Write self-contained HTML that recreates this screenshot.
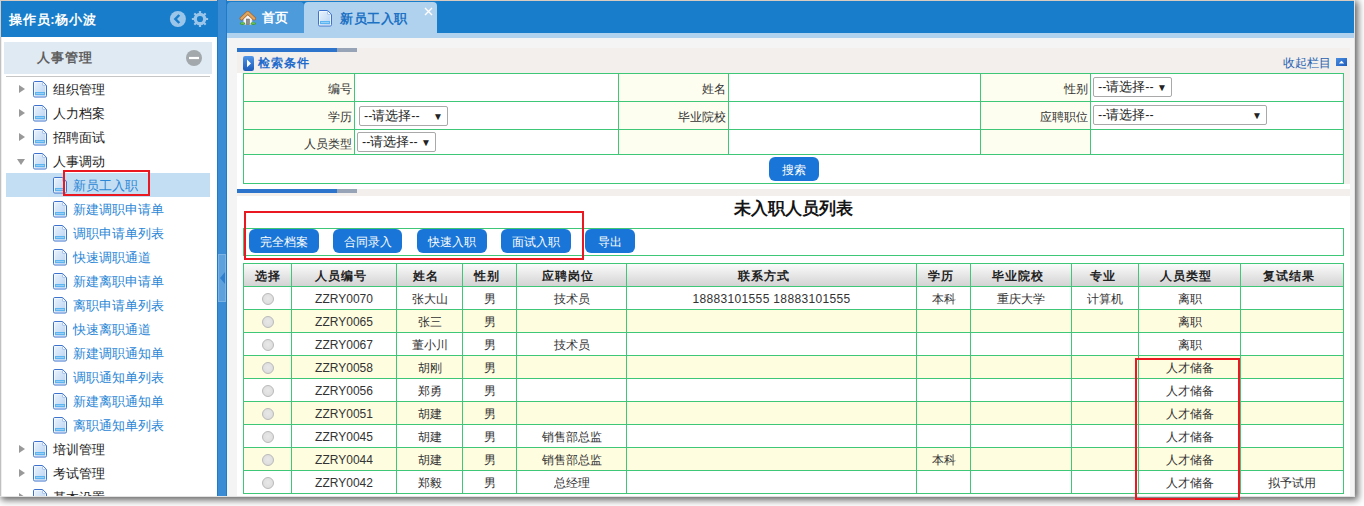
<!DOCTYPE html>
<html><head><meta charset="utf-8">
<style>
*{box-sizing:border-box}
html,body{margin:0;padding:0}
body{width:1364px;height:506px;overflow:hidden;position:relative;background:#fff;font-family:"Liberation Sans",sans-serif;font-size:12px;color:#333}
.abs{position:absolute}
#shadowR{left:0;top:0;width:1355px;height:497px;background:#e2e2e2;box-shadow:2px 2px 7px 1px rgba(0,0,0,0.62)}
#shadowB{display:none}
#win{left:0;top:0;width:1354px;height:496px;background:#fff;overflow:hidden}
/* sidebar */
#sbh{left:1px;top:1px;width:216px;height:36px;background:#187ecb}
#sbh .t{position:absolute;left:8px;top:10px;color:#fff;font-weight:bold;font-size:13px;line-height:17px;white-space:nowrap;letter-spacing:0.75px}
#acc{left:4px;top:42px;width:208px;height:32px;background:#e0eaf3}
#acc .t{position:absolute;left:33px;top:8px;color:#5f5f5f;font-weight:bold;font-size:13px;letter-spacing:1px;line-height:16px}
#sep{left:6px;top:76px;width:204px;height:1px;background:#c6c6c6}
.row{position:absolute;height:24px;white-space:nowrap;font-size:13px;line-height:24px}
.row .tx{position:absolute;top:1px}
.par .tx{left:53px;color:#222}
.chi .tx{left:73px;color:#2a86d6}
.tri{position:absolute;left:19px;top:8px;width:0;height:0;border-top:4.5px solid transparent;border-bottom:4.5px solid transparent;border-left:6px solid #999}
.trid{position:absolute;left:17px;top:10px;width:0;height:0;border-left:4.5px solid transparent;border-right:4.5px solid transparent;border-top:6px solid #999}
.ic{position:absolute;top:4px;width:15px;height:17px}
.par .ic{left:33px}
.chi .ic{left:53px}
#sel{left:6px;top:173px;width:204px;height:24px;background:#c3ddf2}
#split{left:217px;top:0;width:10px;height:496px;background:#3a8cd4;border-left:1px solid #1f7ac8;border-right:1px solid #1f7ac8}
#handle{left:218px;top:254px;width:8px;height:48px;background:#5ea2dd;border:1px solid #7bb3e4}
/* tabs */
#tabbar{left:227px;top:1px;width:1127px;height:32px;background:#187ecb}
#tabstrip{left:227px;top:33px;width:1127px;height:5px;background:#b0d2ee}
.tab{position:absolute;top:2px;height:31px;border-radius:4px 4px 0 0}
#tab1{left:227px;width:77px;background:#4d9bdb}
#tab2{left:304px;width:133px;background:#b0d2ee}
#content{left:227px;top:38px;width:1127px;height:458px;background:#f4f4f4}
.panel{position:absolute;background:#fff}
#p1{left:237px;top:48px;width:1113px;height:141px}
#p2{left:237px;top:189px;width:1113px;height:307px}
.hband{position:absolute;left:0;top:0;width:100%;background:#f2efec}
.bar{position:absolute;left:0;top:0;width:100px;height:4px;background:#2d74cc}
.bar2{position:absolute;left:100px;top:0;width:20px;height:4px;background:#97a3b6}
table{border-collapse:collapse;table-layout:fixed}
td,th{padding:0;border:1px solid #4ecb7c;font-size:12px;overflow:hidden;white-space:nowrap}
#stbl{position:absolute;left:243px;top:73px}
#stbl td{height:28px}
.lb{background:#fefef0;text-align:right;padding-right:3px !important;color:#333}
.sel{position:absolute;height:19px;border:1px solid #a9a9a9;border-radius:2px;background:#fff;font-size:12.5px;line-height:19px;padding-left:4px;color:#222;white-space:nowrap}
.sel .ar{position:absolute;right:4px;top:0;font-size:10px}
.btn{position:absolute;height:24px;background:#1976d8;color:#fff;border-radius:6px;font-size:12px;line-height:26px;text-align:center;white-space:nowrap}
#dtbl{position:absolute;left:243px;top:263px}
#dtbl th{height:23px;background:linear-gradient(#fdfdfd,#d3d3d3);font-weight:bold;font-size:13px;color:#222}
#dtbl td{height:23px;text-align:center;color:#333}
#dtbl tr.y td{background:#fefce0}
.radio{display:inline-block;width:12px;height:12px;border-radius:50%;border:1px solid #b9b9b9;background:radial-gradient(circle at 50% 45%,#e8e8e8,#d9d9d9);vertical-align:middle}
.redbox{position:absolute;border:2px solid #ea1820}
.tc{white-space:nowrap;overflow:hidden;font-size:12px}
.hdrbg{background:linear-gradient(#fdfdfd,#d3d3d3)}
</style></head><body>
<div id="shadowR" class="abs"></div>
<div id="shadowB" class="abs"></div>
<div id="win" class="abs">
<div class="abs" style="left:0;top:0;width:1354px;height:1px;background:#dacbc0"></div><div class="abs" style="left:0;top:0;width:1px;height:37px;background:#dacbc0"></div><div class="abs" style="left:0;top:37px;width:1px;height:459px;background:#c0c0c0"></div><div class="abs" style="left:1px;top:37px;width:1px;height:459px;background:#eeeeee"></div>

<!-- sidebar -->
<div id="sbh" class="abs"><div class="t">操作员:杨小波</div>
<svg class="abs" style="left:168px;top:9px" width="18" height="18" viewBox="0 0 18 18"><circle cx="8.9" cy="9" r="8" fill="#9cc5ea"/><path d="M10.3 5 L6.4 9 L10.3 13" stroke="#187ecb" stroke-width="2.5" fill="none" stroke-linecap="butt" stroke-linejoin="miter"/></svg>
<svg class="abs" style="left:190px;top:9px" width="18" height="18" viewBox="0 0 18 18"><g fill="#9cc5ea"><circle cx="9" cy="9" r="6.3"/><g transform="rotate(0 9 9)"><rect x="7.9" y="0.9" width="2.2" height="3" rx="0.6"/><rect x="7.9" y="14.1" width="2.2" height="3" rx="0.6"/></g><g transform="rotate(45 9 9)"><rect x="7.9" y="0.9" width="2.2" height="3" rx="0.6"/><rect x="7.9" y="14.1" width="2.2" height="3" rx="0.6"/></g><g transform="rotate(90 9 9)"><rect x="7.9" y="0.9" width="2.2" height="3" rx="0.6"/><rect x="7.9" y="14.1" width="2.2" height="3" rx="0.6"/></g><g transform="rotate(135 9 9)"><rect x="7.9" y="0.9" width="2.2" height="3" rx="0.6"/><rect x="7.9" y="14.1" width="2.2" height="3" rx="0.6"/></g></g><circle cx="9" cy="9" r="3.1" fill="#187ecb"/></svg>
</div>
<div id="acc" class="abs"><div class="t">人事管理</div>
<svg class="abs" style="left:182px;top:8px" width="16" height="16" viewBox="0 0 16 16"><circle cx="8" cy="8" r="8" fill="#a3a8ac"/><rect x="3" y="6.9" width="10" height="2.2" fill="#fff"/></svg>
</div>
<div id="sep" class="abs"></div>
<div id="sel" class="abs"></div>
<div id="tree"><div class="row par" style="left:0;top:77px;width:216px"><div class="tri"></div><svg class="ic" viewBox="0 0 15 17"><defs><linearGradient id="g0" x1="0" y1="0" x2="1" y2="1"><stop offset="0" stop-color="#e6f1fd"/><stop offset="1" stop-color="#b9d4f2"/></linearGradient></defs><path d="M0.5 1.8 Q0.5 0.5 1.8 0.5 L9.6 0.5 L13.5 4.4 L13.5 14.7 Q13.5 16 12.2 16 L1.8 16 Q0.5 16 0.5 14.7 Z" fill="#fff" stroke="#3d73cc" stroke-width="1"/><path d="M1.6 1.6 L9.2 1.6 L9.2 4.9 L12.4 4.9 L12.4 14.9 L1.6 14.9 Z" fill="url(#g0)"/><path d="M9.6 1 L9.6 4.4 L13 4.4" fill="none" stroke="#8fb3e6" stroke-width="0.8"/><rect x="2" y="11" width="10" height="3" fill="#5cb5f1"/><rect x="3" y="12.1" width="8" height="0.8" fill="#a6d6f8"/></svg><span class="tx">组织管理</span></div><div class="row par" style="left:0;top:101px;width:216px"><div class="tri"></div><svg class="ic" viewBox="0 0 15 17"><defs><linearGradient id="g1" x1="0" y1="0" x2="1" y2="1"><stop offset="0" stop-color="#e6f1fd"/><stop offset="1" stop-color="#b9d4f2"/></linearGradient></defs><path d="M0.5 1.8 Q0.5 0.5 1.8 0.5 L9.6 0.5 L13.5 4.4 L13.5 14.7 Q13.5 16 12.2 16 L1.8 16 Q0.5 16 0.5 14.7 Z" fill="#fff" stroke="#3d73cc" stroke-width="1"/><path d="M1.6 1.6 L9.2 1.6 L9.2 4.9 L12.4 4.9 L12.4 14.9 L1.6 14.9 Z" fill="url(#g1)"/><path d="M9.6 1 L9.6 4.4 L13 4.4" fill="none" stroke="#8fb3e6" stroke-width="0.8"/><rect x="2" y="11" width="10" height="3" fill="#5cb5f1"/><rect x="3" y="12.1" width="8" height="0.8" fill="#a6d6f8"/></svg><span class="tx">人力档案</span></div><div class="row par" style="left:0;top:125px;width:216px"><div class="tri"></div><svg class="ic" viewBox="0 0 15 17"><defs><linearGradient id="g2" x1="0" y1="0" x2="1" y2="1"><stop offset="0" stop-color="#e6f1fd"/><stop offset="1" stop-color="#b9d4f2"/></linearGradient></defs><path d="M0.5 1.8 Q0.5 0.5 1.8 0.5 L9.6 0.5 L13.5 4.4 L13.5 14.7 Q13.5 16 12.2 16 L1.8 16 Q0.5 16 0.5 14.7 Z" fill="#fff" stroke="#3d73cc" stroke-width="1"/><path d="M1.6 1.6 L9.2 1.6 L9.2 4.9 L12.4 4.9 L12.4 14.9 L1.6 14.9 Z" fill="url(#g2)"/><path d="M9.6 1 L9.6 4.4 L13 4.4" fill="none" stroke="#8fb3e6" stroke-width="0.8"/><rect x="2" y="11" width="10" height="3" fill="#5cb5f1"/><rect x="3" y="12.1" width="8" height="0.8" fill="#a6d6f8"/></svg><span class="tx">招聘面试</span></div><div class="row par" style="left:0;top:149px;width:216px"><div class="trid"></div><svg class="ic" viewBox="0 0 15 17"><defs><linearGradient id="g3" x1="0" y1="0" x2="1" y2="1"><stop offset="0" stop-color="#e6f1fd"/><stop offset="1" stop-color="#b9d4f2"/></linearGradient></defs><path d="M0.5 1.8 Q0.5 0.5 1.8 0.5 L9.6 0.5 L13.5 4.4 L13.5 14.7 Q13.5 16 12.2 16 L1.8 16 Q0.5 16 0.5 14.7 Z" fill="#fff" stroke="#3d73cc" stroke-width="1"/><path d="M1.6 1.6 L9.2 1.6 L9.2 4.9 L12.4 4.9 L12.4 14.9 L1.6 14.9 Z" fill="url(#g3)"/><path d="M9.6 1 L9.6 4.4 L13 4.4" fill="none" stroke="#8fb3e6" stroke-width="0.8"/><rect x="2" y="11" width="10" height="3" fill="#5cb5f1"/><rect x="3" y="12.1" width="8" height="0.8" fill="#a6d6f8"/></svg><span class="tx">人事调动</span></div><div class="row chi" style="left:0;top:173px;width:216px"><svg class="ic" viewBox="0 0 15 17"><defs><linearGradient id="g4" x1="0" y1="0" x2="1" y2="1"><stop offset="0" stop-color="#e6f1fd"/><stop offset="1" stop-color="#b9d4f2"/></linearGradient></defs><path d="M0.5 1.8 Q0.5 0.5 1.8 0.5 L9.6 0.5 L13.5 4.4 L13.5 14.7 Q13.5 16 12.2 16 L1.8 16 Q0.5 16 0.5 14.7 Z" fill="#fff" stroke="#3d73cc" stroke-width="1"/><path d="M1.6 1.6 L9.2 1.6 L9.2 4.9 L12.4 4.9 L12.4 14.9 L1.6 14.9 Z" fill="url(#g4)"/><path d="M9.6 1 L9.6 4.4 L13 4.4" fill="none" stroke="#8fb3e6" stroke-width="0.8"/><rect x="2" y="11" width="10" height="3" fill="#5cb5f1"/><rect x="3" y="12.1" width="8" height="0.8" fill="#a6d6f8"/></svg><span class="tx">新员工入职</span></div><div class="row chi" style="left:0;top:197px;width:216px"><svg class="ic" viewBox="0 0 15 17"><defs><linearGradient id="g5" x1="0" y1="0" x2="1" y2="1"><stop offset="0" stop-color="#e6f1fd"/><stop offset="1" stop-color="#b9d4f2"/></linearGradient></defs><path d="M0.5 1.8 Q0.5 0.5 1.8 0.5 L9.6 0.5 L13.5 4.4 L13.5 14.7 Q13.5 16 12.2 16 L1.8 16 Q0.5 16 0.5 14.7 Z" fill="#fff" stroke="#3d73cc" stroke-width="1"/><path d="M1.6 1.6 L9.2 1.6 L9.2 4.9 L12.4 4.9 L12.4 14.9 L1.6 14.9 Z" fill="url(#g5)"/><path d="M9.6 1 L9.6 4.4 L13 4.4" fill="none" stroke="#8fb3e6" stroke-width="0.8"/><rect x="2" y="11" width="10" height="3" fill="#5cb5f1"/><rect x="3" y="12.1" width="8" height="0.8" fill="#a6d6f8"/></svg><span class="tx">新建调职申请单</span></div><div class="row chi" style="left:0;top:221px;width:216px"><svg class="ic" viewBox="0 0 15 17"><defs><linearGradient id="g6" x1="0" y1="0" x2="1" y2="1"><stop offset="0" stop-color="#e6f1fd"/><stop offset="1" stop-color="#b9d4f2"/></linearGradient></defs><path d="M0.5 1.8 Q0.5 0.5 1.8 0.5 L9.6 0.5 L13.5 4.4 L13.5 14.7 Q13.5 16 12.2 16 L1.8 16 Q0.5 16 0.5 14.7 Z" fill="#fff" stroke="#3d73cc" stroke-width="1"/><path d="M1.6 1.6 L9.2 1.6 L9.2 4.9 L12.4 4.9 L12.4 14.9 L1.6 14.9 Z" fill="url(#g6)"/><path d="M9.6 1 L9.6 4.4 L13 4.4" fill="none" stroke="#8fb3e6" stroke-width="0.8"/><rect x="2" y="11" width="10" height="3" fill="#5cb5f1"/><rect x="3" y="12.1" width="8" height="0.8" fill="#a6d6f8"/></svg><span class="tx">调职申请单列表</span></div><div class="row chi" style="left:0;top:245px;width:216px"><svg class="ic" viewBox="0 0 15 17"><defs><linearGradient id="g7" x1="0" y1="0" x2="1" y2="1"><stop offset="0" stop-color="#e6f1fd"/><stop offset="1" stop-color="#b9d4f2"/></linearGradient></defs><path d="M0.5 1.8 Q0.5 0.5 1.8 0.5 L9.6 0.5 L13.5 4.4 L13.5 14.7 Q13.5 16 12.2 16 L1.8 16 Q0.5 16 0.5 14.7 Z" fill="#fff" stroke="#3d73cc" stroke-width="1"/><path d="M1.6 1.6 L9.2 1.6 L9.2 4.9 L12.4 4.9 L12.4 14.9 L1.6 14.9 Z" fill="url(#g7)"/><path d="M9.6 1 L9.6 4.4 L13 4.4" fill="none" stroke="#8fb3e6" stroke-width="0.8"/><rect x="2" y="11" width="10" height="3" fill="#5cb5f1"/><rect x="3" y="12.1" width="8" height="0.8" fill="#a6d6f8"/></svg><span class="tx">快速调职通道</span></div><div class="row chi" style="left:0;top:269px;width:216px"><svg class="ic" viewBox="0 0 15 17"><defs><linearGradient id="g8" x1="0" y1="0" x2="1" y2="1"><stop offset="0" stop-color="#e6f1fd"/><stop offset="1" stop-color="#b9d4f2"/></linearGradient></defs><path d="M0.5 1.8 Q0.5 0.5 1.8 0.5 L9.6 0.5 L13.5 4.4 L13.5 14.7 Q13.5 16 12.2 16 L1.8 16 Q0.5 16 0.5 14.7 Z" fill="#fff" stroke="#3d73cc" stroke-width="1"/><path d="M1.6 1.6 L9.2 1.6 L9.2 4.9 L12.4 4.9 L12.4 14.9 L1.6 14.9 Z" fill="url(#g8)"/><path d="M9.6 1 L9.6 4.4 L13 4.4" fill="none" stroke="#8fb3e6" stroke-width="0.8"/><rect x="2" y="11" width="10" height="3" fill="#5cb5f1"/><rect x="3" y="12.1" width="8" height="0.8" fill="#a6d6f8"/></svg><span class="tx">新建离职申请单</span></div><div class="row chi" style="left:0;top:293px;width:216px"><svg class="ic" viewBox="0 0 15 17"><defs><linearGradient id="g9" x1="0" y1="0" x2="1" y2="1"><stop offset="0" stop-color="#e6f1fd"/><stop offset="1" stop-color="#b9d4f2"/></linearGradient></defs><path d="M0.5 1.8 Q0.5 0.5 1.8 0.5 L9.6 0.5 L13.5 4.4 L13.5 14.7 Q13.5 16 12.2 16 L1.8 16 Q0.5 16 0.5 14.7 Z" fill="#fff" stroke="#3d73cc" stroke-width="1"/><path d="M1.6 1.6 L9.2 1.6 L9.2 4.9 L12.4 4.9 L12.4 14.9 L1.6 14.9 Z" fill="url(#g9)"/><path d="M9.6 1 L9.6 4.4 L13 4.4" fill="none" stroke="#8fb3e6" stroke-width="0.8"/><rect x="2" y="11" width="10" height="3" fill="#5cb5f1"/><rect x="3" y="12.1" width="8" height="0.8" fill="#a6d6f8"/></svg><span class="tx">离职申请单列表</span></div><div class="row chi" style="left:0;top:317px;width:216px"><svg class="ic" viewBox="0 0 15 17"><defs><linearGradient id="g10" x1="0" y1="0" x2="1" y2="1"><stop offset="0" stop-color="#e6f1fd"/><stop offset="1" stop-color="#b9d4f2"/></linearGradient></defs><path d="M0.5 1.8 Q0.5 0.5 1.8 0.5 L9.6 0.5 L13.5 4.4 L13.5 14.7 Q13.5 16 12.2 16 L1.8 16 Q0.5 16 0.5 14.7 Z" fill="#fff" stroke="#3d73cc" stroke-width="1"/><path d="M1.6 1.6 L9.2 1.6 L9.2 4.9 L12.4 4.9 L12.4 14.9 L1.6 14.9 Z" fill="url(#g10)"/><path d="M9.6 1 L9.6 4.4 L13 4.4" fill="none" stroke="#8fb3e6" stroke-width="0.8"/><rect x="2" y="11" width="10" height="3" fill="#5cb5f1"/><rect x="3" y="12.1" width="8" height="0.8" fill="#a6d6f8"/></svg><span class="tx">快速离职通道</span></div><div class="row chi" style="left:0;top:341px;width:216px"><svg class="ic" viewBox="0 0 15 17"><defs><linearGradient id="g11" x1="0" y1="0" x2="1" y2="1"><stop offset="0" stop-color="#e6f1fd"/><stop offset="1" stop-color="#b9d4f2"/></linearGradient></defs><path d="M0.5 1.8 Q0.5 0.5 1.8 0.5 L9.6 0.5 L13.5 4.4 L13.5 14.7 Q13.5 16 12.2 16 L1.8 16 Q0.5 16 0.5 14.7 Z" fill="#fff" stroke="#3d73cc" stroke-width="1"/><path d="M1.6 1.6 L9.2 1.6 L9.2 4.9 L12.4 4.9 L12.4 14.9 L1.6 14.9 Z" fill="url(#g11)"/><path d="M9.6 1 L9.6 4.4 L13 4.4" fill="none" stroke="#8fb3e6" stroke-width="0.8"/><rect x="2" y="11" width="10" height="3" fill="#5cb5f1"/><rect x="3" y="12.1" width="8" height="0.8" fill="#a6d6f8"/></svg><span class="tx">新建调职通知单</span></div><div class="row chi" style="left:0;top:365px;width:216px"><svg class="ic" viewBox="0 0 15 17"><defs><linearGradient id="g12" x1="0" y1="0" x2="1" y2="1"><stop offset="0" stop-color="#e6f1fd"/><stop offset="1" stop-color="#b9d4f2"/></linearGradient></defs><path d="M0.5 1.8 Q0.5 0.5 1.8 0.5 L9.6 0.5 L13.5 4.4 L13.5 14.7 Q13.5 16 12.2 16 L1.8 16 Q0.5 16 0.5 14.7 Z" fill="#fff" stroke="#3d73cc" stroke-width="1"/><path d="M1.6 1.6 L9.2 1.6 L9.2 4.9 L12.4 4.9 L12.4 14.9 L1.6 14.9 Z" fill="url(#g12)"/><path d="M9.6 1 L9.6 4.4 L13 4.4" fill="none" stroke="#8fb3e6" stroke-width="0.8"/><rect x="2" y="11" width="10" height="3" fill="#5cb5f1"/><rect x="3" y="12.1" width="8" height="0.8" fill="#a6d6f8"/></svg><span class="tx">调职通知单列表</span></div><div class="row chi" style="left:0;top:389px;width:216px"><svg class="ic" viewBox="0 0 15 17"><defs><linearGradient id="g13" x1="0" y1="0" x2="1" y2="1"><stop offset="0" stop-color="#e6f1fd"/><stop offset="1" stop-color="#b9d4f2"/></linearGradient></defs><path d="M0.5 1.8 Q0.5 0.5 1.8 0.5 L9.6 0.5 L13.5 4.4 L13.5 14.7 Q13.5 16 12.2 16 L1.8 16 Q0.5 16 0.5 14.7 Z" fill="#fff" stroke="#3d73cc" stroke-width="1"/><path d="M1.6 1.6 L9.2 1.6 L9.2 4.9 L12.4 4.9 L12.4 14.9 L1.6 14.9 Z" fill="url(#g13)"/><path d="M9.6 1 L9.6 4.4 L13 4.4" fill="none" stroke="#8fb3e6" stroke-width="0.8"/><rect x="2" y="11" width="10" height="3" fill="#5cb5f1"/><rect x="3" y="12.1" width="8" height="0.8" fill="#a6d6f8"/></svg><span class="tx">新建离职通知单</span></div><div class="row chi" style="left:0;top:413px;width:216px"><svg class="ic" viewBox="0 0 15 17"><defs><linearGradient id="g14" x1="0" y1="0" x2="1" y2="1"><stop offset="0" stop-color="#e6f1fd"/><stop offset="1" stop-color="#b9d4f2"/></linearGradient></defs><path d="M0.5 1.8 Q0.5 0.5 1.8 0.5 L9.6 0.5 L13.5 4.4 L13.5 14.7 Q13.5 16 12.2 16 L1.8 16 Q0.5 16 0.5 14.7 Z" fill="#fff" stroke="#3d73cc" stroke-width="1"/><path d="M1.6 1.6 L9.2 1.6 L9.2 4.9 L12.4 4.9 L12.4 14.9 L1.6 14.9 Z" fill="url(#g14)"/><path d="M9.6 1 L9.6 4.4 L13 4.4" fill="none" stroke="#8fb3e6" stroke-width="0.8"/><rect x="2" y="11" width="10" height="3" fill="#5cb5f1"/><rect x="3" y="12.1" width="8" height="0.8" fill="#a6d6f8"/></svg><span class="tx">离职通知单列表</span></div><div class="row par" style="left:0;top:437px;width:216px"><div class="tri"></div><svg class="ic" viewBox="0 0 15 17"><defs><linearGradient id="g15" x1="0" y1="0" x2="1" y2="1"><stop offset="0" stop-color="#e6f1fd"/><stop offset="1" stop-color="#b9d4f2"/></linearGradient></defs><path d="M0.5 1.8 Q0.5 0.5 1.8 0.5 L9.6 0.5 L13.5 4.4 L13.5 14.7 Q13.5 16 12.2 16 L1.8 16 Q0.5 16 0.5 14.7 Z" fill="#fff" stroke="#3d73cc" stroke-width="1"/><path d="M1.6 1.6 L9.2 1.6 L9.2 4.9 L12.4 4.9 L12.4 14.9 L1.6 14.9 Z" fill="url(#g15)"/><path d="M9.6 1 L9.6 4.4 L13 4.4" fill="none" stroke="#8fb3e6" stroke-width="0.8"/><rect x="2" y="11" width="10" height="3" fill="#5cb5f1"/><rect x="3" y="12.1" width="8" height="0.8" fill="#a6d6f8"/></svg><span class="tx">培训管理</span></div><div class="row par" style="left:0;top:461px;width:216px"><div class="tri"></div><svg class="ic" viewBox="0 0 15 17"><defs><linearGradient id="g16" x1="0" y1="0" x2="1" y2="1"><stop offset="0" stop-color="#e6f1fd"/><stop offset="1" stop-color="#b9d4f2"/></linearGradient></defs><path d="M0.5 1.8 Q0.5 0.5 1.8 0.5 L9.6 0.5 L13.5 4.4 L13.5 14.7 Q13.5 16 12.2 16 L1.8 16 Q0.5 16 0.5 14.7 Z" fill="#fff" stroke="#3d73cc" stroke-width="1"/><path d="M1.6 1.6 L9.2 1.6 L9.2 4.9 L12.4 4.9 L12.4 14.9 L1.6 14.9 Z" fill="url(#g16)"/><path d="M9.6 1 L9.6 4.4 L13 4.4" fill="none" stroke="#8fb3e6" stroke-width="0.8"/><rect x="2" y="11" width="10" height="3" fill="#5cb5f1"/><rect x="3" y="12.1" width="8" height="0.8" fill="#a6d6f8"/></svg><span class="tx">考试管理</span></div><div class="row par" style="left:0;top:485px;width:216px"><div class="tri"></div><svg class="ic" viewBox="0 0 15 17"><defs><linearGradient id="g17" x1="0" y1="0" x2="1" y2="1"><stop offset="0" stop-color="#e6f1fd"/><stop offset="1" stop-color="#b9d4f2"/></linearGradient></defs><path d="M0.5 1.8 Q0.5 0.5 1.8 0.5 L9.6 0.5 L13.5 4.4 L13.5 14.7 Q13.5 16 12.2 16 L1.8 16 Q0.5 16 0.5 14.7 Z" fill="#fff" stroke="#3d73cc" stroke-width="1"/><path d="M1.6 1.6 L9.2 1.6 L9.2 4.9 L12.4 4.9 L12.4 14.9 L1.6 14.9 Z" fill="url(#g17)"/><path d="M9.6 1 L9.6 4.4 L13 4.4" fill="none" stroke="#8fb3e6" stroke-width="0.8"/><rect x="2" y="11" width="10" height="3" fill="#5cb5f1"/><rect x="3" y="12.1" width="8" height="0.8" fill="#a6d6f8"/></svg><span class="tx">基本设置</span></div></div>

<div id="split" class="abs"></div>
<div id="handle" class="abs"><div class="abs" style="left:1px;top:17px;width:0;height:0;border-top:6px solid transparent;border-bottom:6px solid transparent;border-right:5px solid #2f7fcf"></div></div>

<!-- tabs -->
<div id="tabbar" class="abs"></div>
<div id="tab1" class="tab"></div>
<div id="tab2" class="tab"></div>
<div id="tabstrip" class="abs"></div>
<div id="content" class="abs"></div>

<div id="p1" class="panel"><div class="hband" style="height:25px"></div><div class="bar"></div><div class="bar2"></div></div>
<div id="p2" class="panel"><div class="hband" style="height:7px"></div><div class="bar"></div><div class="bar2"></div></div>
<svg class="abs" style="left:239px;top:10px" width="18" height="16" viewBox="0 0 18 16"><path d="M4.6 8.2 L8.8 4.4 L13 8.2 L13 14.6 L4.6 14.6 Z" fill="#f7f7f7" stroke="#c9c9c9" stroke-width="0.6"/><path d="M2.4 8.6 L8.8 2.6 L15.2 8.6" fill="none" stroke="#a8642a" stroke-width="3.6" stroke-linejoin="round" stroke-linecap="round"/><path d="M2.4 8.6 L8.8 2.6 L15.2 8.6" fill="none" stroke="#dfa660" stroke-width="2.2" stroke-linejoin="round" stroke-linecap="round"/><rect x="7.3" y="9" width="3.2" height="5.6" fill="#8e8e8e" stroke="#666" stroke-width="0.5"/><ellipse cx="3.6" cy="13.6" rx="2.7" ry="1.4" fill="#3f9e33"/><ellipse cx="14.2" cy="13.6" rx="2.7" ry="1.4" fill="#3f9e33"/><ellipse cx="3.6" cy="13.2" rx="1.8" ry="0.6" fill="#7ccc5e"/><ellipse cx="14.2" cy="13.2" rx="1.8" ry="0.6" fill="#7ccc5e"/></svg>
<div class="abs" style="left:262px;top:9px;font-size:13px;font-weight:bold;color:#fff;line-height:18px;white-space:nowrap">首页</div>
<div class="abs" style="left:318px;top:10px;width:16px;height:18px"><svg width="15" height="17" viewBox="0 0 15 17"><defs><linearGradient id="gt" x1="0" y1="0" x2="1" y2="1"><stop offset="0" stop-color="#e6f1fd"/><stop offset="1" stop-color="#b9d4f2"/></linearGradient></defs><path d="M0.5 1.8 Q0.5 0.5 1.8 0.5 L9.6 0.5 L13.5 4.4 L13.5 14.7 Q13.5 16 12.2 16 L1.8 16 Q0.5 16 0.5 14.7 Z" fill="#fff" stroke="#3d73cc" stroke-width="1"/><path d="M1.6 1.6 L9.2 1.6 L9.2 4.9 L12.4 4.9 L12.4 14.9 L1.6 14.9 Z" fill="url(#gt)"/><path d="M9.6 1 L9.6 4.4 L13 4.4" fill="none" stroke="#8fb3e6" stroke-width="0.8"/><rect x="2" y="11" width="10" height="3" fill="#5cb5f1"/><rect x="3" y="12.1" width="8" height="0.8" fill="#a6d6f8"/></svg></div>
<div class="abs" style="left:340px;top:10px;font-size:13px;letter-spacing:0.6px;font-weight:bold;color:#1d72c4;line-height:18px;white-space:nowrap">新员工入职</div>
<svg class="abs" style="left:424px;top:7px" width="9" height="9" viewBox="0 0 9 9"><path d="M1 1 L8 8 M8 1 L1 8" stroke="#fff" stroke-width="1.4"/></svg>
<svg class="abs" style="left:243px;top:56px" width="11" height="15" viewBox="0 0 11 15"><defs><linearGradient id="bq" x1="0" y1="0" x2="0" y2="1"><stop offset="0" stop-color="#4f95e8"/><stop offset="1" stop-color="#1c58b8"/></linearGradient></defs><rect x="0" y="0" width="11" height="15" rx="2.2" fill="url(#bq)"/><path d="M4 3.6 L8 7.4 L4 11.2 Z" fill="#fff"/></svg>
<div class="abs" style="left:258px;top:54px;font-size:12px;letter-spacing:1px;font-weight:bold;color:#1f6bcc;line-height:18px;white-space:nowrap">检索条件</div>
<div class="abs" style="left:1283px;top:54px;font-size:12px;color:#1f5fb0;line-height:18px;white-space:nowrap">收起栏目</div>
<svg class="abs" style="left:1336px;top:58px" width="11" height="8" viewBox="0 0 11 8"><defs><linearGradient id="cq" x1="0" y1="0" x2="1" y2="1"><stop offset="0" stop-color="#4a8ce0"/><stop offset="1" stop-color="#1d5cbd"/></linearGradient></defs><rect x="0" y="0" width="11" height="8" fill="url(#cq)"/><path d="M2.8 5.4 L5.5 2.7 L8.2 5.4 Z" fill="#fff"/></svg>
<div class="abs" style="left:1344px;top:73px;width:6px;height:111px;background:#f2efec"></div>
<div class="abs" style="left:243px;top:73px;width:111px;height:81px;background:#fefef0"></div>
<div class="abs" style="left:618px;top:73px;width:110px;height:81px;background:#fefef0"></div>
<div class="abs" style="left:980px;top:73px;width:110px;height:81px;background:#fefef0"></div>
<div class="abs" style="left:243px;top:73px;width:1101px;height:1px;background:#3dc777"></div>
<div class="abs" style="left:243px;top:101px;width:1101px;height:1px;background:#3dc777"></div>
<div class="abs" style="left:243px;top:129px;width:1101px;height:1px;background:#3dc777"></div>
<div class="abs" style="left:243px;top:154px;width:1101px;height:1px;background:#3dc777"></div>
<div class="abs" style="left:243px;top:183px;width:1101px;height:1px;background:#3dc777"></div>
<div class="abs" style="left:243px;top:73px;width:1px;height:111px;background:#3dc777"></div>
<div class="abs" style="left:354px;top:73px;width:1px;height:81px;background:#3dc777"></div>
<div class="abs" style="left:618px;top:73px;width:1px;height:81px;background:#3dc777"></div>
<div class="abs" style="left:728px;top:73px;width:1px;height:81px;background:#3dc777"></div>
<div class="abs" style="left:980px;top:73px;width:1px;height:81px;background:#3dc777"></div>
<div class="abs" style="left:1090px;top:73px;width:1px;height:81px;background:#3dc777"></div>
<div class="abs" style="left:1343px;top:73px;width:1px;height:111px;background:#3dc777"></div>
<div class="abs tc" style="left:205px;top:76px;width:147px;height:27px;line-height:27px;text-align:right;color:#333">编号</div>
<div class="abs tc" style="left:579px;top:76px;width:147px;height:27px;line-height:27px;text-align:right;color:#333">姓名</div>
<div class="abs tc" style="left:941px;top:76px;width:147px;height:27px;line-height:27px;text-align:right;color:#333">性别</div>
<div class="abs tc" style="left:205px;top:104px;width:147px;height:27px;line-height:27px;text-align:right;color:#333">学历</div>
<div class="abs tc" style="left:579px;top:104px;width:147px;height:27px;line-height:27px;text-align:right;color:#333">毕业院校</div>
<div class="abs tc" style="left:941px;top:104px;width:147px;height:27px;line-height:27px;text-align:right;color:#333">应聘职位</div>
<div class="abs tc" style="left:205px;top:132px;width:147px;height:24px;line-height:24px;text-align:right;color:#333">人员类型</div>
<div class="sel" style="left:1093px;top:77px;width:79px;height:20px">--请选择--<span class="ar">▼</span></div>
<div class="sel" style="left:359px;top:106px;width:89px;height:20px">--请选择--<span class="ar">▼</span></div>
<div class="sel" style="left:1093px;top:105px;width:174px;height:20px">--请选择--<span class="ar">▼</span></div>
<div class="sel" style="left:357px;top:132px;width:79px;height:20px">--请选择--<span class="ar">▼</span></div>
<div class="btn" style="left:769px;top:157px;width:50px">搜索</div>
<div class="abs" style="left:734px;top:199px;font-size:17px;font-weight:bold;color:#151515;line-height:20px;white-space:nowrap">未入职人员列表</div>
<div class="abs" style="left:243px;top:228px;width:1101px;height:1px;background:#3dc777"></div>
<div class="abs" style="left:243px;top:255px;width:1101px;height:1px;background:#3dc777"></div>
<div class="abs" style="left:243px;top:228px;width:1px;height:28px;background:#3dc777"></div>
<div class="abs" style="left:1343px;top:228px;width:1px;height:28px;background:#3dc777"></div>
<div class="btn" style="left:249px;top:229px;width:70px">完全档案</div>
<div class="btn" style="left:333px;top:229px;width:69px">合同录入</div>
<div class="btn" style="left:417px;top:229px;width:70px">快速入职</div>
<div class="btn" style="left:501px;top:229px;width:70px">面试入职</div>
<div class="btn" style="left:585px;top:229px;width:50px">导出</div>
<div class="abs hdrbg" style="left:243px;top:263px;width:1101px;height:23px"></div>
<div class="abs" style="left:243px;top:309px;width:1101px;height:23px;background:#fffde0"></div>
<div class="abs" style="left:243px;top:355px;width:1101px;height:23px;background:#fffde0"></div>
<div class="abs" style="left:243px;top:401px;width:1101px;height:23px;background:#fffde0"></div>
<div class="abs" style="left:243px;top:447px;width:1101px;height:23px;background:#fffde0"></div>
<div class="abs" style="left:243px;top:263px;width:1101px;height:1px;background:#3dc777"></div>
<div class="abs" style="left:243px;top:286px;width:1101px;height:1px;background:#3dc777"></div>
<div class="abs" style="left:243px;top:309px;width:1101px;height:1px;background:#3dc777"></div>
<div class="abs" style="left:243px;top:332px;width:1101px;height:1px;background:#3dc777"></div>
<div class="abs" style="left:243px;top:355px;width:1101px;height:1px;background:#3dc777"></div>
<div class="abs" style="left:243px;top:378px;width:1101px;height:1px;background:#3dc777"></div>
<div class="abs" style="left:243px;top:401px;width:1101px;height:1px;background:#3dc777"></div>
<div class="abs" style="left:243px;top:424px;width:1101px;height:1px;background:#3dc777"></div>
<div class="abs" style="left:243px;top:447px;width:1101px;height:1px;background:#3dc777"></div>
<div class="abs" style="left:243px;top:470px;width:1101px;height:1px;background:#3dc777"></div>
<div class="abs" style="left:243px;top:493px;width:1101px;height:1px;background:#3dc777"></div>
<div class="abs" style="left:243px;top:263px;width:1px;height:231px;background:#3dc777"></div>
<div class="abs" style="left:291px;top:263px;width:1px;height:231px;background:#3dc777"></div>
<div class="abs" style="left:396px;top:263px;width:1px;height:231px;background:#3dc777"></div>
<div class="abs" style="left:462px;top:263px;width:1px;height:231px;background:#3dc777"></div>
<div class="abs" style="left:516px;top:263px;width:1px;height:231px;background:#3dc777"></div>
<div class="abs" style="left:626px;top:263px;width:1px;height:231px;background:#3dc777"></div>
<div class="abs" style="left:916px;top:263px;width:1px;height:231px;background:#3dc777"></div>
<div class="abs" style="left:970px;top:263px;width:1px;height:231px;background:#3dc777"></div>
<div class="abs" style="left:1071px;top:263px;width:1px;height:231px;background:#3dc777"></div>
<div class="abs" style="left:1138px;top:263px;width:1px;height:231px;background:#3dc777"></div>
<div class="abs" style="left:1240px;top:263px;width:1px;height:231px;background:#3dc777"></div>
<div class="abs" style="left:1343px;top:263px;width:1px;height:231px;background:#3dc777"></div>
<div class="abs tc" style="left:244px;top:265px;width:47px;height:22px;line-height:22px;text-align:center;font-weight:bold;font-size:12px;letter-spacing:1px;text-indent:1px;color:#222">选择</div>
<div class="abs tc" style="left:288px;top:265px;width:104px;height:22px;line-height:22px;text-align:center;font-weight:bold;font-size:12px;letter-spacing:1px;text-indent:1px;color:#222">人员编号</div>
<div class="abs tc" style="left:393px;top:265px;width:65px;height:22px;line-height:22px;text-align:center;font-weight:bold;font-size:12px;letter-spacing:1px;text-indent:1px;color:#222">姓名</div>
<div class="abs tc" style="left:460px;top:265px;width:53px;height:22px;line-height:22px;text-align:center;font-weight:bold;font-size:12px;letter-spacing:1px;text-indent:1px;color:#222">性别</div>
<div class="abs tc" style="left:513px;top:265px;width:109px;height:22px;line-height:22px;text-align:center;font-weight:bold;font-size:12px;letter-spacing:1px;text-indent:1px;color:#222">应聘岗位</div>
<div class="abs tc" style="left:619px;top:265px;width:289px;height:22px;line-height:22px;text-align:center;font-weight:bold;font-size:12px;letter-spacing:1px;text-indent:1px;color:#222">联系方式</div>
<div class="abs tc" style="left:914px;top:265px;width:53px;height:22px;line-height:22px;text-align:center;font-weight:bold;font-size:12px;letter-spacing:1px;text-indent:1px;color:#222">学历</div>
<div class="abs tc" style="left:967px;top:265px;width:100px;height:22px;line-height:22px;text-align:center;font-weight:bold;font-size:12px;letter-spacing:1px;text-indent:1px;color:#222">毕业院校</div>
<div class="abs tc" style="left:1069px;top:265px;width:66px;height:22px;line-height:22px;text-align:center;font-weight:bold;font-size:12px;letter-spacing:1px;text-indent:1px;color:#222">专业</div>
<div class="abs tc" style="left:1135px;top:265px;width:101px;height:22px;line-height:22px;text-align:center;font-weight:bold;font-size:12px;letter-spacing:1px;text-indent:1px;color:#222">人员类型</div>
<div class="abs tc" style="left:1237px;top:265px;width:102px;height:22px;line-height:22px;text-align:center;font-weight:bold;font-size:12px;letter-spacing:1px;text-indent:1px;color:#222">复试结果</div>
<div class="abs radio" style="left:262px;top:293px"></div>
<div class="abs tc" style="left:292px;top:288px;width:104px;height:22px;line-height:22px;text-align:center;color:#333">ZZRY0070</div>
<div class="abs tc" style="left:397px;top:288px;width:65px;height:22px;line-height:22px;text-align:center;color:#333">张大山</div>
<div class="abs tc" style="left:463px;top:288px;width:53px;height:22px;line-height:22px;text-align:center;color:#333">男</div>
<div class="abs tc" style="left:517px;top:288px;width:109px;height:22px;line-height:22px;text-align:center;color:#333">技术员</div>
<div class="abs tc" style="left:627px;top:288px;width:289px;height:22px;line-height:22px;text-align:center;color:#333;letter-spacing:0.35px">18883101555 18883101555</div>
<div class="abs tc" style="left:917px;top:288px;width:53px;height:22px;line-height:22px;text-align:center;color:#333">本科</div>
<div class="abs tc" style="left:971px;top:288px;width:100px;height:22px;line-height:22px;text-align:center;color:#333">重庆大学</div>
<div class="abs tc" style="left:1072px;top:288px;width:66px;height:22px;line-height:22px;text-align:center;color:#333">计算机</div>
<div class="abs tc" style="left:1139px;top:288px;width:101px;height:22px;line-height:22px;text-align:center;color:#333">离职</div>
<div class="abs radio" style="left:262px;top:316px"></div>
<div class="abs tc" style="left:292px;top:311px;width:104px;height:22px;line-height:22px;text-align:center;color:#333">ZZRY0065</div>
<div class="abs tc" style="left:397px;top:311px;width:65px;height:22px;line-height:22px;text-align:center;color:#333">张三</div>
<div class="abs tc" style="left:463px;top:311px;width:53px;height:22px;line-height:22px;text-align:center;color:#333">男</div>
<div class="abs tc" style="left:1139px;top:311px;width:101px;height:22px;line-height:22px;text-align:center;color:#333">离职</div>
<div class="abs radio" style="left:262px;top:339px"></div>
<div class="abs tc" style="left:292px;top:334px;width:104px;height:22px;line-height:22px;text-align:center;color:#333">ZZRY0067</div>
<div class="abs tc" style="left:397px;top:334px;width:65px;height:22px;line-height:22px;text-align:center;color:#333">董小川</div>
<div class="abs tc" style="left:463px;top:334px;width:53px;height:22px;line-height:22px;text-align:center;color:#333">男</div>
<div class="abs tc" style="left:517px;top:334px;width:109px;height:22px;line-height:22px;text-align:center;color:#333">技术员</div>
<div class="abs tc" style="left:1139px;top:334px;width:101px;height:22px;line-height:22px;text-align:center;color:#333">离职</div>
<div class="abs radio" style="left:262px;top:362px"></div>
<div class="abs tc" style="left:292px;top:357px;width:104px;height:22px;line-height:22px;text-align:center;color:#333">ZZRY0058</div>
<div class="abs tc" style="left:397px;top:357px;width:65px;height:22px;line-height:22px;text-align:center;color:#333">胡刚</div>
<div class="abs tc" style="left:463px;top:357px;width:53px;height:22px;line-height:22px;text-align:center;color:#333">男</div>
<div class="abs tc" style="left:1139px;top:357px;width:101px;height:22px;line-height:22px;text-align:center;color:#333">人才储备</div>
<div class="abs radio" style="left:262px;top:385px"></div>
<div class="abs tc" style="left:292px;top:380px;width:104px;height:22px;line-height:22px;text-align:center;color:#333">ZZRY0056</div>
<div class="abs tc" style="left:397px;top:380px;width:65px;height:22px;line-height:22px;text-align:center;color:#333">郑勇</div>
<div class="abs tc" style="left:463px;top:380px;width:53px;height:22px;line-height:22px;text-align:center;color:#333">男</div>
<div class="abs tc" style="left:1139px;top:380px;width:101px;height:22px;line-height:22px;text-align:center;color:#333">人才储备</div>
<div class="abs radio" style="left:262px;top:408px"></div>
<div class="abs tc" style="left:292px;top:403px;width:104px;height:22px;line-height:22px;text-align:center;color:#333">ZZRY0051</div>
<div class="abs tc" style="left:397px;top:403px;width:65px;height:22px;line-height:22px;text-align:center;color:#333">胡建</div>
<div class="abs tc" style="left:463px;top:403px;width:53px;height:22px;line-height:22px;text-align:center;color:#333">男</div>
<div class="abs tc" style="left:1139px;top:403px;width:101px;height:22px;line-height:22px;text-align:center;color:#333">人才储备</div>
<div class="abs radio" style="left:262px;top:431px"></div>
<div class="abs tc" style="left:292px;top:426px;width:104px;height:22px;line-height:22px;text-align:center;color:#333">ZZRY0045</div>
<div class="abs tc" style="left:397px;top:426px;width:65px;height:22px;line-height:22px;text-align:center;color:#333">胡建</div>
<div class="abs tc" style="left:463px;top:426px;width:53px;height:22px;line-height:22px;text-align:center;color:#333">男</div>
<div class="abs tc" style="left:517px;top:426px;width:109px;height:22px;line-height:22px;text-align:center;color:#333">销售部总监</div>
<div class="abs tc" style="left:1139px;top:426px;width:101px;height:22px;line-height:22px;text-align:center;color:#333">人才储备</div>
<div class="abs radio" style="left:262px;top:454px"></div>
<div class="abs tc" style="left:292px;top:449px;width:104px;height:22px;line-height:22px;text-align:center;color:#333">ZZRY0044</div>
<div class="abs tc" style="left:397px;top:449px;width:65px;height:22px;line-height:22px;text-align:center;color:#333">胡建</div>
<div class="abs tc" style="left:463px;top:449px;width:53px;height:22px;line-height:22px;text-align:center;color:#333">男</div>
<div class="abs tc" style="left:517px;top:449px;width:109px;height:22px;line-height:22px;text-align:center;color:#333">销售部总监</div>
<div class="abs tc" style="left:917px;top:449px;width:53px;height:22px;line-height:22px;text-align:center;color:#333">本科</div>
<div class="abs tc" style="left:1139px;top:449px;width:101px;height:22px;line-height:22px;text-align:center;color:#333">人才储备</div>
<div class="abs radio" style="left:262px;top:477px"></div>
<div class="abs tc" style="left:292px;top:472px;width:104px;height:22px;line-height:22px;text-align:center;color:#333">ZZRY0042</div>
<div class="abs tc" style="left:397px;top:472px;width:65px;height:22px;line-height:22px;text-align:center;color:#333">郑毅</div>
<div class="abs tc" style="left:463px;top:472px;width:53px;height:22px;line-height:22px;text-align:center;color:#333">男</div>
<div class="abs tc" style="left:517px;top:472px;width:109px;height:22px;line-height:22px;text-align:center;color:#333">总经理</div>
<div class="abs tc" style="left:1139px;top:472px;width:101px;height:22px;line-height:22px;text-align:center;color:#333">人才储备</div>
<div class="abs tc" style="left:1241px;top:472px;width:102px;height:22px;line-height:22px;text-align:center;color:#333">拟予试用</div>
</div>
<div class="redbox" style="left:63px;top:170px;width:87px;height:26px"></div>
<div class="redbox" style="left:244px;top:211px;width:340px;height:49px"></div>
<div class="redbox" style="left:1135px;top:358px;width:105px;height:142px"></div>
</body></html>
